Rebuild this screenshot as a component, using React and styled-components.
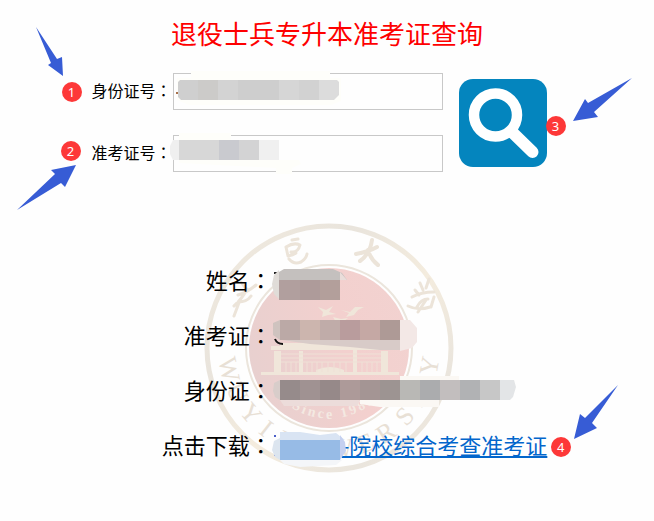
import React from "react";
import styled, { createGlobalStyle } from "styled-components";

const GlobalStyle = createGlobalStyle`
  * { box-sizing: border-box; }
  body {
    margin: 0;
    background: #fefefe;
    color: #000;
    font-family: "Noto Sans CJK SC", "Liberation Sans", sans-serif;
  }
`;

const Page = styled.main`
  display: flex;
  flex-direction: column;
  align-items: center;
  padding: 14px 0 20px;
  overflow: hidden;
`;

const Title = styled.h1`
  margin: 0;
  font-size: 26px;
  line-height: 38px;
  font-weight: 400;
  color: #fe0000;
`;

const SearchForm = styled.form`
  display: flex;
  align-items: center;
  gap: 16px;
  margin-top: 21px;
  padding-right: 16px;
`;

const Fields = styled.div`
  display: flex;
  flex-direction: column;
  gap: 25px;
`;

const Field = styled.div`
  position: relative;
  display: flex;
  align-items: center;
`;

const FieldLabel = styled.label`
  width: 81px;
  padding-bottom: 4px;
  font-size: 16px;
  line-height: 24px;
  white-space: nowrap;
`;

const Colon = styled.span`
  font-family: "Noto Sans CJK TC", sans-serif;
`;

const TextInput = styled.input`
  width: 270px;
  height: 37px;
  padding: 0 8px;
  border: 1px solid #c8c8c8;
  border-radius: 0;
  background: #fefefe;
  font: inherit;
  font-size: 16px;
`;

const SearchSlot = styled.div`
  position: relative;
  display: flex;
`;

const SearchButton = styled.button`
  width: 88px;
  height: 88px;
  padding: 0;
  border: 0;
  border-radius: 14px;
  background: #0485be;
  cursor: pointer;
  svg { display: block; }
`;

const Badge = styled.span`
  position: absolute;
  left: ${(p) => p.$left};
  top: ${(p) => p.$top};
  width: 20px;
  height: 20px;
  border-radius: 50%;
  background: #fd3838;
  color: #fff;
  font-family: "Noto Sans", sans-serif;
  font-size: 13px;
  line-height: 20px;
  text-align: center;
`;

const Overlay = styled.svg`
  position: absolute;
  left: ${(p) => p.$left}px;
  top: ${(p) => p.$top}px;
  pointer-events: none;
`;

const Results = styled.section`
  position: relative;
  margin-top: 80px;
  margin-left: 55px;
`;

const ResultList = styled.dl`
  position: relative;
  display: grid;
  grid-template-columns: auto auto;
  margin: 0;
  font-size: 22px;
  line-height: 55px;
`;

const Term = styled.dt`
  text-align: right;
`;

const Value = styled.dd`
  position: relative;
  margin: 0;
`;

const DownloadLink = styled.a`
  color: #0366cc;
  text-decoration: underline;
  text-underline-offset: 2px;
`;

const HiddenName = styled.span`
  display: inline-block;
  width: 70px;
`;

/* A blue pointer, drawn in its own box. */
function Arrow({ left, top, width, height, points }) {
  return (
    <Overlay $left={left} $top={top} width={width} height={height} aria-hidden="true">
      <polygon points={points} fill="#375cd5" />
    </Overlay>
  );
}

/* A run of mosaic cells: [x, width, colour]. */
function Cells({ y, height = 20, cells }) {
  return cells.map(([x, w, fill]) => (
    <rect key={x} x={x} y={y} width={w} height={height} fill={fill} />
  ));
}

function SealLetter({ angle, radius, size, children, ...rest }) {
  const rad = (angle * Math.PI) / 180;
  const x = 125 - radius * Math.cos(rad);
  const y = 125 + radius * Math.sin(rad);
  return (
    <text
      transform={`translate(${x} ${y}) rotate(${90 - angle})`}
      textAnchor="middle"
      dominantBaseline="central"
      fontSize={size}
      {...rest}
    >
      {children}
    </text>
  );
}

const SEAL_LATIN = [
  ["W", 12], ["U", 26], ["Y", 40], ["I", 52], ["U", 66], ["N", 79], ["I", 89],
  ["V", 99], ["E", 111], ["R", 124], ["S", 138], ["I", 149], ["T", 158], ["Y", 170],
];
const SEAL_SINCE = [
  ["S", 61], ["i", 68], ["n", 75], ["c", 83], ["e", 90], ["1", 103], ["9", 111], ["8", 119], ["5", 127],
];

function Seal() {
  return (
    <Overlay $left={42} $top={-29} width="250" height="250" aria-hidden="true">
      <defs>
        <linearGradient id="ring" x1="0" y1="0" x2="1" y2="1">
          <stop offset="0" stopColor="#f2ebdf" />
          <stop offset="0.3" stopColor="#e9e4dc" />
          <stop offset="0.55" stopColor="#f4ecde" />
          <stop offset="0.8" stopColor="#eae5dd" />
          <stop offset="1" stopColor="#f3ebdf" />
        </linearGradient>
        <linearGradient id="disc" x1="0" y1="0.6" x2="1" y2="0.3">
          <stop offset="0" stopColor="#e8d0cf" />
          <stop offset="0.6" stopColor="#f3d0ce" />
          <stop offset="1" stopColor="#f2d2d0" />
        </linearGradient>
      </defs>
      <circle cx="125" cy="125" r="122" fill="none" stroke="url(#ring)" strokeWidth="5" />
      <circle cx="125" cy="125" r="83" fill="none" stroke="#ebe5dc" strokeWidth="2" />
      <circle cx="125" cy="125" r="80" fill="url(#disc)" />
      <g fill="#e8e0d5" fontFamily="'Liberation Serif', serif">
        {SEAL_LATIN.map(([c, a]) => (
          <SealLetter key={a} angle={a} radius={102} size={26}>{c}</SealLetter>
        ))}
      </g>
      <g fill="#f4e9e2" fontFamily="'Liberation Serif', serif" fontWeight="700">
        {SEAL_SINCE.map(([c, a]) => (
          <SealLetter key={a} angle={a} radius={66} size={14}>{c}</SealLetter>
        ))}
      </g>
      <g fill="none" stroke="#ece4d9" strokeWidth="3" strokeLinecap="round" strokeLinejoin="round">
        <path d="M37 59l5 7M34 72q10-3 18-10M43 66q-5 10-13 17M34 79q9 0 13-6M30 93l6-16" />
        <path d="M88 17l6-1M82 24q8-5 14-2q-2 8-9 7M82 24l2 9q5-1 8-3M85 36q5 6 12 3q5-3 6-8" />
        <path strokeWidth="4" d="M152 31q12-2 21-7M168 17q-2 14-12 21M164 27q3 10 10 15" />
        <path d="M211 67l4 5M216 60l3 7M225 56l-3 9M208 74q9-5 22-5M213 84q4-8 11-8M204 83q10 5 22 1M222 77l-8 12M230 74l-3 10" />
      </g>
      <g fill="#f0e6da">
        <path d="M114 84l8 3 7-4-4 6 7 2-8 1-6 2 1-5zM137 87l9 2 5-5 9 0-6 3-4 5-8 2 3-4zM129 94l8 2 7-1-5 4-7 0z" />
        <path d="M67 123h116v4H67zM76 120h98v3H76zM102 116h46v4h-46zM57 149h138v3H57z" />
        <path d="M70 128h7v21h-7zM95 128h4v21h-4zM149 118h4v31h-4zM177 128h7v21h-7zM112 147q14-6 28 0v3h-28z" />
      </g>
      <g fill="none" stroke="#efe0d6">
        <path d="M77 131h100M77 135h100M77 139h100" />
        <path d="M82 139v10M87 139v10M92 139v10M103 139v10M108 139v10M113 139v10M118 139v10M124 139v10M130 139v10M136 139v10M142 139v10M158 139v10M163 139v10M168 139v10M173 139v10" />
      </g>
    </Overlay>
  );
}

export default function App() {
  return (
    <>
      <GlobalStyle />
      <Page>
        <Title>退役士兵专升本准考证查询</Title>

        <SearchForm onSubmit={(e) => e.preventDefault()}>
          <Fields>
            <Field>
              <FieldLabel htmlFor="id-number">身份证号<Colon>：</Colon></FieldLabel>
              <TextInput id="id-number" type="text" />
              <Overlay $left={77} $top={-3} width="180" height="40" viewBox="170 70 180 40" aria-hidden="true">
                <path d="M192 71H331V78H342V101L332 105H190L178 100V78H192Z" fill="#fefefa" />
                <path d="M177 92h2v2h-2z" fill="#a8704a" />
                <clipPath id="mask-id"><path d="M181 80H338L340 82V95L335 100H182L179 97V82Z" /></clipPath>
                <g clipPath="url(#mask-id)">
                  <Cells y={80} cells={[[179, 20, "#cfcfcf"], [199, 20, "#cccbc9"], [219, 20, "#d3d3d3"], [239, 41, "#cecece"], [280, 20, "#d6d6d6"], [300, 20, "#d2d2d2"], [320, 20, "#dcdcdc"]]} />
                </g>
              </Overlay>
              <Badge $left="-30px" $top="9px">1</Badge>
              <Arrow left={-56} top={-46} width={28} height={50} points="0,0 21,32 26,30 27,49 12,38 15,36" />
            </Field>
            <Field>
              <FieldLabel htmlFor="ticket-number">准考证号<Colon>：</Colon></FieldLabel>
              <TextInput id="ticket-number" type="text" />
              <Overlay $left={77} $top={-3} width="140" height="44" viewBox="170 132 140 44" aria-hidden="true">
                <path d="M180 133H232V140H280V160H300L302 164L293 168V174H277V168L180 163Z" fill="#fefefa" />
                <path d="M180 140H174L171 146V154L174 160H180Z" fill="#efefef" />
                <Cells y={140} cells={[[180, 40, "#d7d7d7"], [220, 20, "#c9cacf"], [240, 20, "#d3d3d4"], [260, 20, "#f0f0f0"]]} />
              </Overlay>
              <Badge $left="-31px" $top="6px">2</Badge>
              <Arrow left={-75} top={30} width={60} height={46} points="0,45 38,9 34,5 59,0 48,22 44,18" />
            </Field>
          </Fields>
          <SearchSlot>
            <SearchButton type="submit" aria-label="查询">
              <svg width="88" height="88" viewBox="0 0 88 88" fill="none" stroke="#fff">
                <circle cx="36.5" cy="36" r="21.5" strokeWidth="10.5" />
                <path d="M53 53L73.5 73" strokeWidth="12" strokeLinecap="round" />
              </svg>
            </SearchButton>
            <Badge $left="87px" $top="37px">3</Badge>
            <Arrow left={114} top={-1} width={60} height={44} points="59,0 15,25 12,21 0,43 25,39 21,34" />
          </SearchSlot>
        </SearchForm>

        <Results>
          <Seal />
          <ResultList>
            <Term>姓名<Colon>：</Colon></Term>
            <Value>
              <Overlay $left={0} $top={14} width="80" height="38" viewBox="272 266 80 38" aria-hidden="true">
                <path d="M274 272h5v2h-5z" fill="#222" />
                <path d="M279 270L274 275L272 284L274 294L279 299Z" fill="#e0dcd8" />
                <path d="M284 269H333L342 273L347 280H279V272Z" fill="#c4c0be" />
                <path d="M340 272L347 280H340Z" fill="#eaddda" />
                <Cells y={280} cells={[[279, 21, "#b19f9e"], [300, 20, "#ae9b9a"], [320, 20, "#b39f9b"]]} />
              </Overlay>
            </Value>

            <Term>准考证<Colon>：</Colon></Term>
            <Value>
              <Overlay $left={0} $top={10} width="150" height="38" viewBox="272 317 150 38" aria-hidden="true">
                <path d="M275 339q2 5 8 5" fill="none" stroke="#111" strokeWidth="2" />
                <path d="M280 320L273 323V335L280 340Z" fill="#cfc3bf" />
                <path d="M282 340H400V350H380L350 347L310 344Z" fill="#d8cbc8" />
                <path d="M400 320H410L417 328V342L412 348L400 351Z" fill="#f3e8e6" />
                <Cells y={320} cells={[[280, 20, "#bba9a6"], [300, 20, "#ccb5ae"], [320, 20, "#c0aca9"], [340, 20, "#b99c9d"], [360, 20, "#c5a8a4"], [380, 20, "#ae9a96"]]} />
              </Overlay>
            </Value>

            <Term>身份证<Colon>：</Colon></Term>
            <Value>
              <Overlay $left={0} $top={12} width="250" height="38" viewBox="272 374 250 38" aria-hidden="true">
                <path d="M400 376H459V380H400ZM360 400H439V407H380L360 404Z" fill="#fbf8f4" />
                <path d="M280 400H360L357 406H284Z" fill="#ecdcda" />
                <path d="M280 380L274 383L273 391L275 397L280 400Z" fill="#d8cdca" />
                <path d="M500 380H514L516 387L513 397L510 400H500Z" fill="#e3e5e7" />
                <Cells y={380} cells={[[280, 20, "#968b8b"], [300, 20, "#a09292"], [320, 20, "#968989"], [340, 20, "#ad9a99"], [360, 20, "#a49594"], [380, 20, "#9d9492"], [400, 20, "#b9b8b5"], [420, 20, "#abacae"], [440, 20, "#c2bebe"], [460, 20, "#b1b2b4"], [480, 20, "#c7c7c7"]]} />
              </Overlay>
            </Value>

            <Term>点击下载<Colon>：</Colon></Term>
            <Value>
              <DownloadLink href="#download"><HiddenName />-院校综合考查准考证</DownloadLink>
              <Overlay $left={0} $top={10} width="80" height="44" viewBox="272 427 80 44" aria-hidden="true">
                <path d="M274 435h2v2h-2zM274 454h2v2h-2z" fill="#4b5fc8" />
                <path d="M280 460H342L336 465L300 467L284 464Z" fill="#f4f6f9" />
                <path d="M280 432H300L320 435L336 433L345 440H280Z" fill="#d9e4f3" />
                <path d="M280 438L274 441L272 450L275 457L280 460Z" fill="#dce5ef" />
                <path d="M340 435L345 442L346 451L340 460Z" fill="#c5d0f0" />
                <Cells y={440} cells={[[280, 60, "#97bbe6"]]} />
              </Overlay>
              <Badge $left="279px" $top="20px">4</Badge>
              <Arrow left={302} top={-32} width={46} height={55} points="44,0 11,33 6,29 0,54 23,43 18,38" />
            </Value>
          </ResultList>
        </Results>
      </Page>
    </>
  );
}
